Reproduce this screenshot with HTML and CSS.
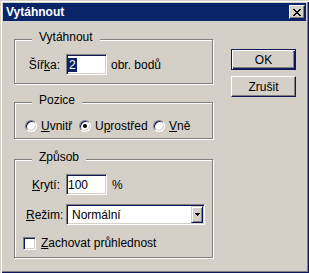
FILE: index.html
```html
<!DOCTYPE html>
<html lang="cs">
<head>
    <meta charset="UTF-8">
    <title>Vytáhnout</title>
    <link rel="stylesheet" href="styles.css">
</head>
<body>
    <div class="window">
        <div class="titlebar">
            <span class="title">Vytáhnout</span>
            <span class="close">
                <svg width="8" height="7" viewBox="0 0 8 7">
                    <path d="M0 0h2v1H0zM6 0h2v1H6zM1 1h2v1H1zM5 1h2v1H5zM2 2h4v1H2zM3 3h2v1H3zM2 4h4v1H2zM1 5h2v1H1zM5 5h2v1H5zM0 6h2v1H0zM6 6h2v1H6z" fill="#000"/>
                </svg>
            </span>
        </div>
        <div class="client">
            <div class="groups">
                <div class="group g-stroke">
                    <span class="legend">Vytáhnout</span>
                    <div class="row">
                        <span class="label">Šíř<u>k</u>a:</span>
                        <span class="field w41"><span class="sel">2</span></span>
                        <span class="unit">obr. bodů</span>
                    </div>
                </div>
                <div class="group g-pos">
                    <span class="legend">Pozice</span>
                    <div class="radios">
                        <span class="radio-item w54"><span class="radio"></span><u>U</u>vnitř</span>
                        <span class="radio-item w74"><span class="radio on"></span>U<u>p</u>rostřed</span>
                        <span class="radio-item"><span class="radio"></span><u>V</u>ně</span>
                    </div>
                </div>
                <div class="group g-mode">
                    <span class="legend">Způsob</span>
                    <div class="row">
                        <span class="label"><u>K</u>rytí:</span>
                        <span class="field w41"><span class="val">100</span></span>
                        <span class="unit pct">%</span>
                    </div>
                    <div class="row row-select">
                        <span class="label"><u>R</u>ežim:</span>
                        <span class="field select">
                            <span class="val grow">Normální</span>
                            <span class="drop">
                                <svg width="5" height="3" viewBox="0 0 5 3">
                                    <path d="M0 0h5v1H0zM1 1h3v1H1zM2 2h1v1H2z" fill="#000"/>
                                </svg>
                            </span>
                        </span>
                    </div>
                    <div class="check-row">
                        <span class="check"></span>
                        <span><u>Z</u>achovat průhlednost</span>
                    </div>
                </div>
            </div>
            <div class="buttons">
                <div class="btn default">OK</div>
                <div class="btn">Zrušit</div>
            </div>
        </div>
    </div>
</body>
</html>
```

FILE: styles.css
```css
body {
    margin: 0;
    font-family: "Liberation Sans", Arial, sans-serif;
    font-size: 12px;
    color: #000;
    background: #d4d0c8;
}
u {
    text-underline-offset: 1px;
}
.window {
    width: 309px;
    height: 273px;
    box-sizing: border-box;
    padding: 3px;
    background: #d4d0c8;
    box-shadow: inset 1px 1px 0 #d4d0c8, inset 2px 2px 0 #fff,
        inset -1px -1px 0 #10185a, inset -2px -2px 0 #808080;
}
.titlebar {
    height: 18px;
    background: #0a246a;
    display: flex;
    align-items: center;
    justify-content: space-between;
    padding: 0 1px 0 3px;
}
.title {
    color: #fff;
    font-weight: bold;
    font-size: 12px;
}
.close {
    width: 16px;
    height: 14px;
    box-sizing: border-box;
    background: #d4d0c8;
    border: 1px solid;
    border-color: #fff #10185a #10185a #fff;
    box-shadow: inset -1px -1px 0 #808080;
    display: flex;
    align-items: center;
    justify-content: center;
}
.client {
    display: flex;
    align-items: flex-start;
    padding: 18px 0 0 11px;
}
.groups {
    width: 199px;
}
.group {
    box-sizing: border-box;
    border: 1px solid #808080;
    box-shadow: 1px 1px 0 #fff, inset 1px 1px 0 #fff;
    display: flex;
    flex-direction: column;
    align-items: flex-start;
}
.legend {
    margin: -10px 0 0 17px;
    padding: 0 7px;
    background: #d4d0c8;
    line-height: 14px;
}
.g-stroke {
    height: 45px;
}
.g-pos {
    height: 37px;
    margin-top: 18px;
}
.g-mode {
    height: 99px;
    margin-top: 20px;
}
.row {
    display: flex;
    align-items: center;
    margin-top: 10px;
}
.row-select {
    margin-top: 9px;
}
.label {
    width: 34px;
    text-align: right;
    margin: 0 6px 0 11px;
}
.field {
    height: 21px;
    box-sizing: border-box;
    border: 1px solid;
    border-color: #808080 #fff #fff #808080;
    box-shadow: inset 1px 1px 0 #10185a, inset -1px -1px 0 #d4d0c8;
    background: #fff;
    display: flex;
    align-items: center;
    padding: 0 1px;
    line-height: 14px;
}
.w41 {
    width: 41px;
}
.sel {
    background: #0a246a;
    color: #fff;
    padding: 0 1px;
}
.unit {
    margin-left: 4px;
}
.pct {
    margin-left: 5px;
}
.select {
    width: 139px;
}
.grow {
    flex: 1;
    padding-left: 4px;
}
.drop {
    width: 12px;
    height: 17px;
    box-sizing: border-box;
    background: #d4d0c8;
    border: 1px solid;
    border-color: #d4d0c8 #10185a #10185a #d4d0c8;
    box-shadow: inset 1px 1px 0 #fff, inset -1px -1px 0 #808080;
    display: flex;
    align-items: center;
    justify-content: center;
}
.radios {
    display: flex;
    align-items: center;
    height: 14px;
    margin: 12px 0 0 10px;
}
.radio-item {
    display: flex;
    align-items: center;
}
.w54 {
    width: 54px;
}
.w74 {
    width: 74px;
}
.radio {
    width: 12px;
    height: 12px;
    box-sizing: border-box;
    border-radius: 50%;
    border: 1px solid;
    border-color: #808080 #fff #fff #808080;
    box-shadow: inset 1px 1px 0 #10185a, inset -1px -1px 0 #d4d0c8;
    background: #fff;
    margin-right: 4px;
    display: flex;
    align-items: center;
    justify-content: center;
}
.radio.on::after {
    content: "";
    width: 4px;
    height: 4px;
    border-radius: 50%;
    background: #000;
}
.check-row {
    display: flex;
    align-items: center;
    margin: 11px 0 0 8px;
}
.check {
    width: 13px;
    height: 13px;
    box-sizing: border-box;
    border: 1px solid;
    border-color: #808080 #fff #fff #808080;
    box-shadow: inset 1px 1px 0 #10185a, inset -1px -1px 0 #d4d0c8;
    background: #fff;
    margin-right: 5px;
}
.buttons {
    margin: 10px 0 0 18px;
}
.btn {
    width: 65px;
    height: 21px;
    box-sizing: border-box;
    border: 1px solid;
    border-color: #fff #10185a #10185a #fff;
    box-shadow: inset -1px -1px 0 #808080;
    display: flex;
    align-items: center;
    justify-content: center;
    margin-bottom: 6px;
}
.btn.default {
    border-color: #10185a;
    box-shadow: inset 1px 1px 0 #fff, inset -1px -1px 0 #10185a, inset -2px -2px 0 #808080;
}
```
